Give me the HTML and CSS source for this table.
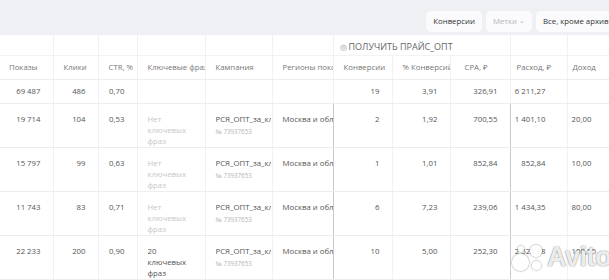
FILE: index.html
```html
<!DOCTYPE html>
<html lang="ru">
<head>
<meta charset="utf-8">
<link rel="stylesheet" href="styles.css">
</head>
<body>
<div class="page">
  <div class="toolbar">
    <button class="btn">Конверсии</button>
    <button class="btn btn-muted">Метки <span class="chev">⌄</span></button>
    <button class="btn btn-wide">Все, кроме архивных</button>
  </div>
  <table class="grid">
    <colgroup>
      <col class="c1"><col class="c2"><col class="c3"><col class="c4"><col class="c5"><col class="c6">
      <col class="c7"><col class="c8"><col class="c9"><col class="c10"><col class="c11">
    </colgroup>
    <thead>
      <tr class="group-row">
        <th></th><th></th><th></th><th></th><th></th><th></th>
        <th colspan="3" class="group"><span class="goal">◎</span>ПОЛУЧИТЬ ПРАЙС_ОПТ</th>
        <th></th><th></th>
      </tr>
      <tr class="head-row">
        <th>Показы</th><th>Клики</th><th>CTR, %</th><th class="clipr">Ключевые фразы</th><th>Кампания</th>
        <th class="clipr">Регионы показа</th><th>Конверсии</th><th class="clipr">% Конверсий</th><th class="pad-cpa">CPA, ₽</th>
        <th class="pad-r">Расход, ₽</th><th class="pad-d">Доход</th>
      </tr>
    </thead>
    <tbody>
      <tr class="total">
        <td class="num">69 487</td><td class="num">486</td><td class="num">0,70</td><td></td><td></td><td></td>
        <td class="num">19</td><td class="num">3,91</td><td class="num">326,91</td><td class="num">6 211,27</td><td></td>
      </tr>
      <tr class="row">
        <td class="num">19 714</td><td class="num">104</td><td class="num">0,53</td>
        <td class="muted">Нет ключевых фраз</td>
        <td class="clipr"><div class="camp">РСЯ_ОПТ_за_клики</div><div class="cid">№ 73937653</div></td>
        <td class="clipr">Москва и область</td>
        <td class="num sep">2</td><td class="num">1,92</td><td class="num">700,55</td><td class="num sep">1 401,10</td><td class="num-l">20,00</td>
      </tr>
      <tr class="row">
        <td class="num">15 797</td><td class="num">99</td><td class="num">0,63</td>
        <td class="muted">Нет ключевых фраз</td>
        <td class="clipr"><div class="camp">РСЯ_ОПТ_за_клики</div><div class="cid">№ 73937653</div></td>
        <td class="clipr">Москва и область</td>
        <td class="num sep">1</td><td class="num">1,01</td><td class="num">852,84</td><td class="num sep">852,84</td><td class="num-l">10,00</td>
      </tr>
      <tr class="row">
        <td class="num">11 743</td><td class="num">83</td><td class="num">0,71</td>
        <td class="muted">Нет ключевых фраз</td>
        <td class="clipr"><div class="camp">РСЯ_ОПТ_за_клики</div><div class="cid">№ 73937653</div></td>
        <td class="clipr">Москва и область</td>
        <td class="num sep">6</td><td class="num">7,23</td><td class="num">239,06</td><td class="num sep">1 434,35</td><td class="num-l">80,00</td>
      </tr>
      <tr class="row">
        <td class="num">22 233</td><td class="num">200</td><td class="num">0,90</td>
        <td class="dark">20 ключевых фраз</td>
        <td class="clipr"><div class="camp">РСЯ_ОПТ_за_клики</div><div class="cid">№ 73937653</div></td>
        <td class="clipr">Москва и область</td>
        <td class="num sep">10</td><td class="num">5,00</td><td class="num">252,30</td><td class="num sep">2 522,98</td><td class="num-l">100,00</td>
      </tr>
    </tbody>
  </table>
  <div class="watermark" aria-hidden="true">
    <span class="dots">
      <i class="d d1"></i><i class="d d2"></i><i class="d d3"></i><i class="d d4"></i>
    </span>
    <span class="wm-text">Avito</span>
  </div>
</div>
</body>
</html>
```
FILE: styles.css
```css
* { box-sizing: border-box; }
html, body { margin: 0; padding: 0; background: #fff; }
body {
  font-family: "Open Sans", "Noto Sans", sans-serif;
  font-size: 7.8px;
  color: #555;
  width: 609px;
  height: 280px;
  overflow: hidden;
}
.page { position: relative; width: 609px; height: 280px; overflow: hidden; }

.toolbar {
  height: 35px;
  background: #eef0f4;
  display: flex;
  justify-content: flex-end;
  align-items: center;
  gap: 4px;
  margin-right: -12px;
}
.btn {
  font-family: inherit;
  font-size: 7.8px;
  color: #333;
  background: #fbfbfd;
  border: none;
  border-radius: 5px;
  height: 21px;
  padding: 0 7px;
  white-space: nowrap;
  margin-top: 7px;
}
.btn-muted { color: #b3b5bb; }
.chev { font-size: 7px; position: relative; top: -1px; }
.btn-wide { width: 85px; overflow: hidden; text-align: left; }

.grid {
  border-collapse: collapse;
  table-layout: fixed;
  width: 609px;
}
.c1 { width: 53px; } .c2 { width: 45px; } .c3 { width: 39px; } .c4 { width: 68px; }
.c5 { width: 67px; } .c6 { width: 61px; } .c7 { width: 59px; } .c8 { width: 58px; }
.c9 { width: 60px; } .c10 { width: 57px; } .c11 { width: 42px; }

.grid th, .grid td {
  border-left: 1px solid #f1f1f3;
  border-bottom: 1px solid #ededf0;
  white-space: nowrap;
  overflow: hidden;
  padding: 0 8px 0 10px;
  text-align: left;
  font-weight: 400;
}
.grid th:first-child, .grid td:first-child { border-left: none; padding-left: 9px; }
.clipr { padding-right: 1px !important; }

.group-row th { height: 20px; border-bottom: 1px solid #f3f3f5; }
.group { font-size: 9px; color: #666; padding-left: 6px !important; padding-top: 3px !important; }
.goal { font-size: 8px; color: #999; margin-right: 2px; }
.head-row th { height: 24px; color: #777; }
.pad-cpa { padding-left: 14px !important; }
.pad-r { padding-left: 6px !important; }
.pad-d { padding-left: 5px !important; }

.total td { height: 24px; }
.row td { height: 44px; vertical-align: top; padding-top: 10px; line-height: 11px; }

.num { text-align: right !important; padding-right: 12px !important; padding-left: 2px !important; }
.total td.num:nth-child(10), .row td.num:nth-child(10) { padding-right: 21px !important; }
.num-l { padding-left: 4px !important; }
.row td.sep { border-left: 1px solid #c9c9cc; }

.muted { color: #c6c6ca; white-space: normal !important; }
.dark { color: #555; white-space: normal !important; }
.camp { color: #555; white-space: nowrap; overflow: hidden; }
.cid { font-size: 6.2px; color: #b3b3b7; margin-top: 1px; }

.watermark {
  position: absolute;
  right: -2px;
  bottom: 6px;
  display: flex;
  align-items: center;
  gap: 2px;
}
.dots { position: relative; width: 36px; height: 34px; display: block; }
.d {
  position: absolute;
  border-radius: 50%;
  background: rgba(255,255,255,0.92);
  box-shadow: 0 0 1.5px 0.5px rgba(0,0,0,0.35);
}
.d1 { width: 17px; height: 17px; left: 3px; top: 14px; }
.d2 { width: 12px; height: 12px; left: 21px; top: 5px; }
.d3 { width: 9px; height: 9px; left: 23px; top: 21px; }
.d4 { width: 6px; height: 6px; left: 9px; top: 6px; }
.wm-text {
  font-family: "Liberation Sans", Arial, sans-serif;
  font-weight: 700;
  font-size: 27px;
  color: rgba(255,255,255,0.9);
  text-shadow: 0 0 1.5px rgba(0,0,0,0.45), 0 0 1px rgba(0,0,0,0.3);
  letter-spacing: -0.5px;
}
```
